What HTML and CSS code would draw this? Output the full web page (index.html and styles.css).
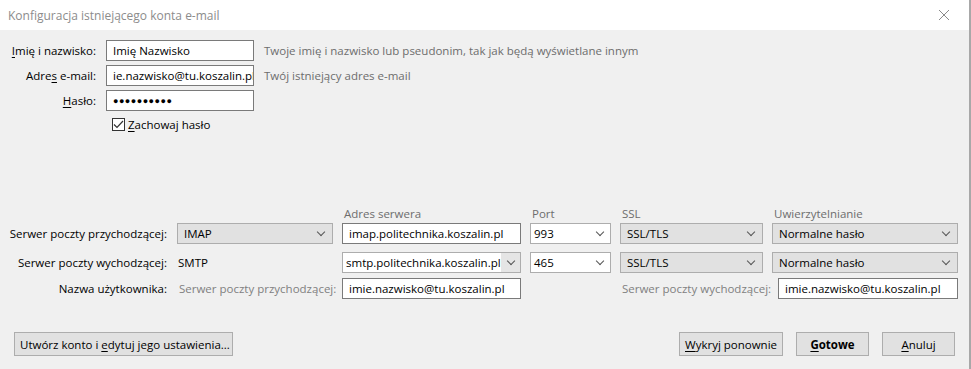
FILE: index.html
```html
<!DOCTYPE html>
<html lang="pl">
<head>
    <meta charset="UTF-8">
    <title>Konfiguracja istniejącego konta e-mail</title>
    <link rel="stylesheet" href="styles.css">
</head>
<body>
    <div class="window">
        <div class="titlebar">
            <span class="title">Konfiguracja istniejącego konta e-mail</span>
            <svg class="close" width="12" height="12" viewBox="0 0 12 12"><path d="M1 1 L11 11 M11 1 L1 11" stroke="#8a8a8a" stroke-width="1"/></svg>
        </div>

        <div class="content">
            <div class="identity">
                <label><u>I</u>mię i nazwisko:</label>
                <div class="field">Imię Nazwisko</div>
                <span class="hint">Twoje imię i nazwisko lub pseudonim, tak jak będą wyświetlane innym</span>

                <label>Adre<u>s</u> e-mail:</label>
                <div class="field">ie.nazwisko@tu.koszalin.pl</div>
                <span class="hint">Twój istniejący adres e-mail</span>

                <label><u>H</u>asło:</label>
                <div class="field password">●●●●●●●●●●</div>
                <span></span>

                <span></span>
                <div class="remember">
                    <span class="checkbox"><svg width="11" height="9" viewBox="0 0 11 9"><path d="M1 4.5 L4 7.5 L10 1" fill="none" stroke="#333" stroke-width="1.2"/></svg></span>
                    <span><u>Z</u>achowaj hasło</span>
                </div>
            </div>

            <div class="servers">
                <span></span>
                <span></span>
                <span class="colhead">Adres serwera</span>
                <span class="colhead">Port</span>
                <span class="colhead">SSL</span>
                <span class="colhead">Uwierzytelnianie</span>

                <span class="rowlabel">Serwer poczty przychodzącej:</span>
                <div class="select">IMAP<i class="arrow"></i></div>
                <div class="field">imap.politechnika.koszalin.pl</div>
                <div class="combo">993<span class="drop"><i class="arrow"></i></span></div>
                <div class="select">SSL/TLS<i class="arrow"></i></div>
                <div class="select">Normalne hasło<i class="arrow"></i></div>

                <span class="rowlabel r2">Serwer poczty wychodzącej:</span>
                <span class="plain r2">SMTP</span>
                <div class="combo r2">smtp.politechnika.koszalin.pl<span class="drop shaded"><i class="arrow"></i></span></div>
                <div class="combo r2">465<span class="drop"><i class="arrow"></i></span></div>
                <div class="select r2">SSL/TLS<i class="arrow"></i></div>
                <div class="select r2">Normalne hasło<i class="arrow"></i></div>

                <span class="rowlabel">Nazwa użytkownika:</span>
                <span class="muted">Serwer poczty przychodzącej:</span>
                <div class="field">imie.nazwisko@tu.koszalin.pl</div>
                <span></span>
                <div class="outuser">
                    <span class="muted">Serwer poczty wychodzącej:</span>
                    <div class="field">imie.nazwisko@tu.koszalin.pl</div>
                </div>
            </div>

            <div class="buttons">
                <button class="btn wide">Utwórz konto i <u>e</u>dytuj jego ustawienia...</button>
                <div class="right">
                    <button class="btn detect"><u>W</u>ykryj ponownie</button>
                    <button class="btn bold"><u>G</u>otowe</button>
                    <button class="btn"><u>A</u>nuluj</button>
                </div>
            </div>
        </div>
    </div>
</body>
</html>
```

FILE: styles.css
```css
body {
    margin: 0;
    font-family: "Open Sans", "Noto Sans", sans-serif;
    font-size: 11.5px;
    color: #000;
    background: #f0f0f0;
}
u { text-decoration: underline; text-underline-offset: 2px; }
.window {
    width: 969px;
    height: 369px;
    border-right: 2px solid #a8a8a8;
    background: #f0f0f0;
}
.titlebar {
    height: 30px;
    background: #fff;
    display: flex;
    align-items: center;
    justify-content: space-between;
    padding: 0 19px 0 8px;
}
.title { color: #8c8c8c; font-size: 12px; }
.close { display: block; }
.content { padding-top: 10px; }

.identity {
    display: grid;
    grid-template-columns: 96px 148px auto;
    column-gap: 10px;
    row-gap: 4px;
    align-items: center;
}
.identity label { text-align: right; }
.field {
    height: 21px;
    box-sizing: border-box;
    border: 1px solid #7a7a7a;
    background: #fff;
    padding: 0 6px;
    display: flex;
    align-items: center;
    white-space: nowrap;
    overflow: hidden;
}
.password { font-size: 9px; letter-spacing: 0.5px; }
.hint { color: #6d6d6d; }
.remember {
    display: flex;
    align-items: center;
    gap: 3px;
    margin-left: 6px;
    margin-top: 2px;
}
.checkbox {
    width: 13px;
    height: 13px;
    box-sizing: border-box;
    border: 1px solid #333;
    background: #fff;
    display: flex;
    align-items: center;
    justify-content: center;
}

.servers {
    margin-top: 74px;
    padding-left: 1px;
    display: grid;
    grid-template-columns: 167px 156px 179px 81px 143px 186px;
    column-gap: 9px;
    row-gap: 5px;
    align-items: center;
}
.r2 { margin-top: 3px; }
.colhead { color: #6d6d6d; padding-left: 2px; margin-bottom: -3px; }
.rowlabel { text-align: right; padding-right: 1px; }
.plain { padding-left: 1px; }
.muted { color: #808080; padding-left: 2px; white-space: nowrap; }
.select {
    height: 21px;
    box-sizing: border-box;
    border: 1px solid #adadad;
    background: #e1e1e1;
    padding: 0 6px;
    display: flex;
    align-items: center;
    justify-content: space-between;
}
.combo {
    height: 21px;
    box-sizing: border-box;
    border: 1px solid #adadad;
    background: #fff;
    padding-left: 3px;
    display: flex;
    align-items: center;
    justify-content: space-between;
    white-space: nowrap;
    overflow: hidden;
}
.drop {
    width: 21px;
    height: 100%;
    display: flex;
    align-items: center;
    justify-content: center;
    flex-shrink: 0;
}
.drop.shaded { background: #e5e5e5; }
.arrow {
    width: 5px;
    height: 5px;
    border-right: 1px solid #555;
    border-bottom: 1px solid #555;
    transform: rotate(45deg);
    margin-top: -4px;
    margin-right: 2px;
}
.drop .arrow { margin-right: 0; }
.outuser {
    grid-column: 5 / 7;
    display: flex;
    justify-content: space-between;
    align-items: center;
}
.outuser .field { width: 180px; }

.buttons {
    margin-top: 33px;
    display: flex;
    justify-content: space-between;
    padding: 0 14px;
}
.right { display: flex; gap: 13px; }
.btn {
    height: 24px;
    min-width: 73px;
    box-sizing: border-box;
    border: 1px solid #adadad;
    background: #e1e1e1;
    font-family: inherit;
    font-size: 11.5px;
    color: #000;
    padding: 0 5px;
    white-space: nowrap;
}
.btn.wide { width: 219px; }
.btn.detect { width: 104px; }
.btn.bold { font-weight: bold; }
```
